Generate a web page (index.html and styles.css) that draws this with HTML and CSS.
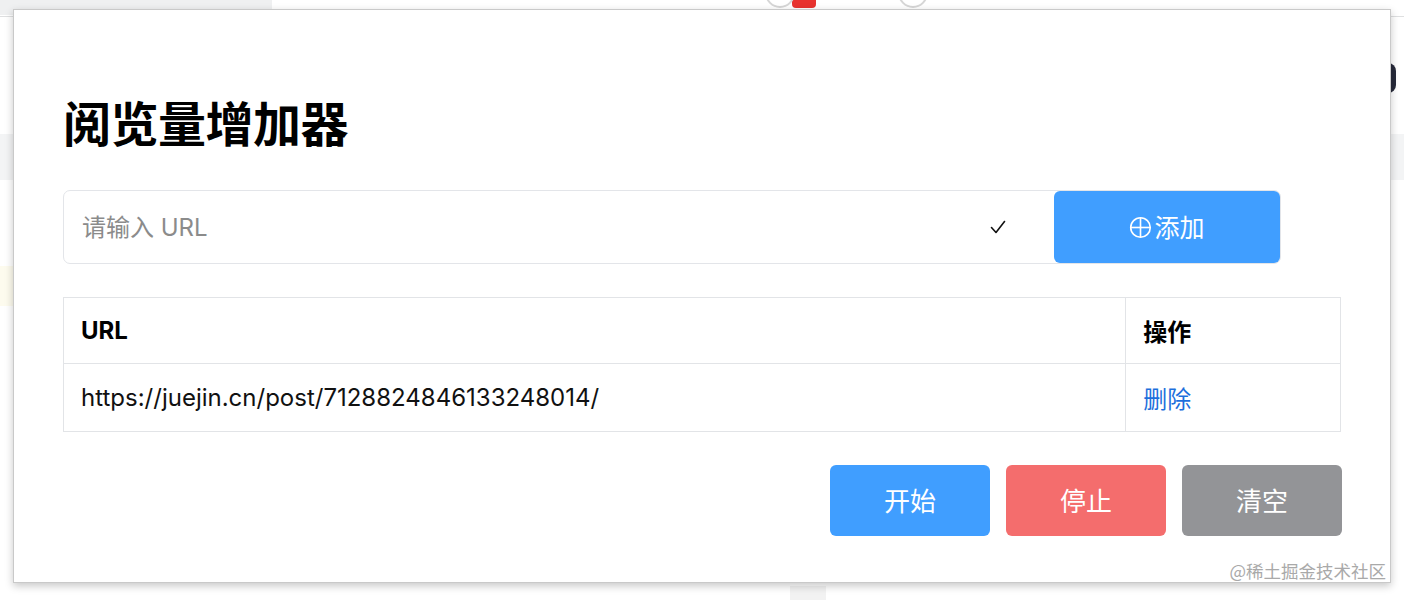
FILE: index.html
```html
<!DOCTYPE html>
<html lang="zh-CN">
<head>
<meta charset="utf-8">
<title>阅览量增加器</title>
<link rel="stylesheet" href="styles.css">
</head>
<body>
<div class="backdrop">
  <div class="tabstrip"></div>
  <div class="tabline"></div>
  <div class="band"></div>
  <div class="yellow"></div>
  <div class="pill"></div>
  <div class="badge"></div>
  <div class="circle circle-a"></div>
  <div class="circle circle-b"></div>
  <div class="grey-patch"></div>
</div>
<div class="popup">
  <h1 class="title">阅览量增加器</h1>
  <div class="input-group">
    <div class="input">
      <span class="placeholder">请输入 URL</span>
      <svg class="check" viewBox="0 0 16 16" width="16" height="16"><polyline points="1.5,8.5 6,13.5 14.5,2.5" fill="none" stroke="#111" stroke-width="1.6" stroke-linecap="round" stroke-linejoin="round"/></svg>
    </div>
    <button class="btn btn-add"><svg class="plus" viewBox="0 0 24 24" width="23" height="23"><circle cx="12" cy="12" r="10.2" fill="none" stroke="#fff" stroke-width="1.7"/><line x1="12" y1="2" x2="12" y2="22" stroke="#fff" stroke-width="1.7"/><line x1="2" y1="12" x2="22" y2="12" stroke="#fff" stroke-width="1.7"/></svg>添加</button>
  </div>
  <table class="url-table">
    <thead>
      <tr><th class="col-url">URL</th><th class="col-op">操作</th></tr>
    </thead>
    <tbody>
      <tr><td>https://juejin.cn/post/7128824846133248014/</td><td><a class="del">删除</a></td></tr>
    </tbody>
  </table>
  <div class="actions">
    <button class="btn btn-start">开始</button>
    <button class="btn btn-stop">停止</button>
    <button class="btn btn-clear">清空</button>
  </div>
  <div class="watermark">@稀土掘金技术社区</div>
</div>
</body>
</html>
```

FILE: styles.css
```css
* { box-sizing: border-box; }
html, body { margin: 0; padding: 0; }
body {
  width: 1404px;
  height: 600px;
  overflow: hidden;
  background: #ffffff;
  font-family: "Inter", "Noto Sans CJK SC", sans-serif;
  color: #111;
  position: relative;
}

/* page behind the popup */
.backdrop { position: absolute; inset: 0; }
.tabstrip { position: absolute; left: 0; top: 0; width: 272px; height: 15px; background: #eff0f1; border-bottom-right-radius: 6px; }
.tabline { position: absolute; left: 0; top: 16px; width: 1404px; height: 1px; background: #dedfe0; }
.band { position: absolute; left: 0; top: 134px; width: 1404px; height: 46px; background: #f3f4f5; }
.yellow { position: absolute; left: 0; top: 266px; width: 20px; height: 40px; background: #fdfbee; }
.pill { position: absolute; left: 1380px; top: 63px; width: 16px; height: 30px; background: #272a3a; border-radius: 8px; }
.badge { position: absolute; left: 792px; top: -4px; width: 24px; height: 12px; background: #e8332f; border-radius: 4px; }
.circle { position: absolute; top: -22px; width: 30px; height: 30px; border-radius: 50%; border: 2px solid #d6d6d6; background: #fff; }
.circle-a { left: 765px; }
.circle-b { left: 898px; }
.grey-patch { position: absolute; left: 790px; top: 586px; width: 36px; height: 14px; background: #f2f2f2; }

/* popup */
.popup {
  position: absolute;
  left: 13px;
  top: 9px;
  width: 1378px;
  height: 574px;
  background: #fff;
  border: 1px solid #c9c9c9;
  box-shadow: 0 3px 8px rgba(0, 0, 0, 0.22);
  padding: 81px 48px 0 49px;
}

.title {
  margin: 0;
  font-family: "Noto Sans CJK SC", sans-serif;
  font-size: 48px;
  line-height: 60px;
  font-weight: 700;
  color: #000;
  letter-spacing: -0.5px;
}

.input-group {
  margin-top: 39px;
  width: 1218px;
  height: 74px;
  border: 1px solid #e3e5e9;
  border-radius: 7px;
  display: flex;
}
.input {
  flex: 1;
  display: flex;
  align-items: center;
  justify-content: space-between;
  padding: 0 48px 0 18px;
}
.placeholder {
  font-size: 24px;
  color: #8b8b8b;
  margin-top: -3px;
}
.check { margin-top: 0; }

.btn {
  border: none;
  color: #fff;
  font-family: "Inter", "Noto Sans CJK SC", sans-serif;
  font-size: 25px;
  border-radius: 6px;
  display: flex;
  align-items: center;
  justify-content: center;
  padding: 0 0 3px;
  cursor: pointer;
}
.btn-add {
  width: 226px;
  height: 72px;
  background: #409eff;
  gap: 2px;
}
.plus { margin-top: 3px; }

.url-table {
  margin-top: 33px;
  width: 1278px;
  border-collapse: collapse;
  font-size: 24px;
}
.url-table th,
.url-table td {
  border: 1.5px solid #e2e4e7;
  padding: 0 17px 1px;
  text-align: left;
}
.url-table th { height: 66px; font-weight: 700; color: #000; }
.url-table td { height: 68px; color: #111; }
.col-url { width: 1063px; }
.col-op { width: 215px; }
.del { color: #1d6fdc; text-decoration: none; }

.actions {
  margin-top: 33px;
  width: 1279px;
  display: flex;
  justify-content: flex-end;
  gap: 16px;
}
.actions .btn { width: 160px; height: 71px; font-size: 26px; }
.btn-start { background: #409eff; }
.btn-stop { background: #f46d6d; }
.btn-clear { background: #939497; }

.watermark {
  position: absolute;
  right: 4px;
  bottom: -1px;
  font-family: "Noto Sans CJK SC", sans-serif;
  font-size: 17.5px;
  color: #a9a9a9;
  text-shadow: 0 0 1px #fff;
}
```
